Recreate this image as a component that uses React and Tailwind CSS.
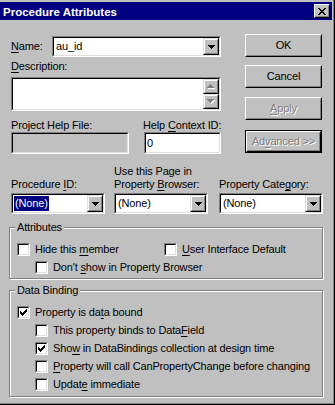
import React from 'react';

// classic win95 bevels
const Sunken = ({ className = '', innerClassName = '', children }) => (
  <div className={`border border-t-[#808080] border-l-[#808080] border-b-white border-r-white ${className}`}>
    <div className={`h-full border border-t-black border-l-black border-b-[#dfdfdf] border-r-[#dfdfdf] ${innerClassName}`}>
      {children}
    </div>
  </div>
);

const ArrowBox = ({ className = '', children }) => (
  <div className={`border border-t-[#dfdfdf] border-l-[#dfdfdf] border-b-black border-r-black bg-[#c0c0c0] ${className}`}>
    <div className="h-full border border-t-white border-l-white border-b-[#808080] border-r-[#808080] flex items-center justify-center">
      {children}
    </div>
  </div>
);

const Down = ({ color = '#000' }) => (
  <svg width="7" height="4" viewBox="0 0 7 4" shapeRendering="crispEdges">
    <path d="M0 0h7v1H0zM1 1h5v1H1zM2 2h3v1H2zM3 3h1v1H3z" fill={color} />
  </svg>
);

const Up = ({ color = '#000' }) => (
  <svg width="7" height="4" viewBox="0 0 7 4" shapeRendering="crispEdges">
    <path d="M3 0h1v1H3zM2 1h3v1H2zM1 2h5v1H1zM0 3h7v1H0z" fill={color} />
  </svg>
);

// disabled arrow = gray glyph with a white one under it
const Dim = ({ children }) => (
  <div className="relative w-[8px] h-[5px]">
    <div className="absolute left-[1px] top-[1px]">{React.cloneElement(children, { color: '#fff' })}</div>
    <div className="absolute left-0 top-0">{React.cloneElement(children, { color: '#808080' })}</div>
  </div>
);

const U = ({ children }) => <span className="underline decoration-1 underline-offset-[2px]">{children}</span>;

const Combo = ({ className = '', children }) => (
  <Sunken className={`h-[21px] ${className}`} innerClassName="bg-white flex">
    <div className="flex-1 flex items-center pl-[1px] leading-[13px]">{children}</div>
    <ArrowBox className="w-[16px] h-full">
      <Down />
    </ArrowBox>
  </Sunken>
);

const Btn = ({ children, disabled, def, className = '' }) => (
  <div className={`w-[77px] h-[23px] ${def ? 'border border-black' : ''} ${className}`}>
    <div className="h-full border border-t-white border-l-white border-b-black border-r-black">
      <div
        className={`h-full border border-t-[#c0c0c0] border-l-[#c0c0c0] border-b-[#808080] border-r-[#808080] flex items-center justify-center leading-[13px] ${
          disabled ? 'text-[#808080] [text-shadow:1px_1px_0_#fff]' : ''
        }`}
      >
        {children}
      </div>
    </div>
  </div>
);

const Check = ({ checked }) => (
  <div className="w-[13px] h-[13px] shrink-0 border border-t-[#808080] border-l-[#808080] border-b-white border-r-white">
    <div className="w-full h-full border border-t-black border-l-black border-b-[#dfdfdf] border-r-[#dfdfdf] bg-white flex items-center justify-center">
      {checked && (
        <svg width="7" height="7" viewBox="0 0 7 7" shapeRendering="crispEdges">
          <path
            d="M6 0h1v1H6zM5 1h2v1H5zM0 2h1v1H0zM4 2h3v1H4zM0 3h2v1H0zM3 3h3v1H3zM0 4h5v1H0zM1 5h3v1H1zM2 6h1v1H2z"
            fill="#000"
          />
        </svg>
      )}
    </div>
  </div>
);

const CheckRow = ({ checked, children, className = '' }) => (
  <div className={`flex items-center h-[13px] ${className}`}>
    <Check checked={checked} />
    <span className="ml-[5px] leading-[13px] whitespace-nowrap">{children}</span>
  </div>
);

const Group = ({ title, className = '', children }) => (
  <fieldset
    className={`ml-[9px] w-[314px] border border-[#808080] shadow-[1px_1px_0_#fff,inset_1px_1px_0_#fff] pl-[7px] ${className}`}
  >
    <legend className="-ml-[2px] px-[2px] bg-[#c0c0c0] leading-[13px]">{title}</legend>
    {children}
  </fieldset>
);

export default function App() {
  return (
    <div className="w-[335px] h-[405px] bg-[#c0c0c0] border-r border-b border-r-black border-b-black text-black text-[11px] tracking-[-0.15px] font-['Liberation_Sans',Arial,sans-serif] overflow-hidden">
      <div className="h-full border-r border-b border-r-[#808080] border-b-[#808080] pr-[1px] flex flex-col">
        <div className="h-[2px] shrink-0" />

        {/* title bar */}
        <div className="h-[18px] shrink-0 bg-[#000080] flex items-center pl-[3px] pr-[2px]">
          <span className="flex-1 text-white font-bold text-[11.5px] tracking-normal leading-[16px] pt-[2px]">
            Procedure Attributes
          </span>
          <div className="w-[16px] h-[14px] border border-t-white border-l-white border-b-black border-r-black bg-[#c0c0c0]">
            <div className="h-full border border-t-[#c0c0c0] border-l-[#c0c0c0] border-b-[#808080] border-r-[#808080] flex items-center justify-center">
              <svg width="8" height="7" viewBox="0 0 8 7" shapeRendering="crispEdges">
                <path
                  d="M0 0h2v1H0zM6 0h2v1H6zM1 1h2v1H1zM5 1h2v1H5zM2 2h4v1H2zM3 3h2v1H3zM2 4h4v1H2zM1 5h2v1H1zM5 5h2v1H5zM0 6h2v1H0zM6 6h2v1H6z"
                  fill="#000"
                />
              </svg>
            </div>
          </div>
        </div>

        {/* top part: fields + buttons */}
        <div className="flex">
          <div className="ml-[11px] w-[210px]">
            <div className="mt-[16px] flex items-center h-[21px]">
              <span className="w-[41px] leading-[13px]">
                <U>N</U>ame:
              </span>
              <Combo className="w-[169px]">
                <span className="pl-[1px]">au_id</span>
              </Combo>
            </div>

            <div className="mt-[3px] leading-[13px]">
              <U>D</U>escription:
            </div>
            <Sunken className="mt-[4px] h-[34px]" innerClassName="bg-white flex justify-end">
              <div className="w-[16px] flex flex-col">
                <ArrowBox className="h-[15px]">
                  <Dim>
                    <Up />
                  </Dim>
                </ArrowBox>
                <ArrowBox className="h-[15px]">
                  <Dim>
                    <Down />
                  </Dim>
                </ArrowBox>
              </div>
            </Sunken>

            <div className="mt-[8px] flex">
              <div className="w-[118px]">
                <div className="leading-[13px]">Project Help File:</div>
                <Sunken className="h-[22px]" innerClassName="bg-[#c0c0c0]" />
              </div>
              <div className="ml-[15px] w-[77px]">
                <div className="leading-[13px] -ml-[1px] whitespace-nowrap">
                  Help <U>C</U>ontext ID:
                </div>
                <Sunken className="h-[22px]" innerClassName="bg-white flex items-center pl-[1px] leading-[13px]">
                  0
                </Sunken>
              </div>
            </div>
          </div>

          <div className="ml-[24px] flex flex-col">
            <Btn className="mt-[14px]">OK</Btn>
            <Btn className="mt-[8px]">Cancel</Btn>
            <Btn className="mt-[9px]" disabled>
              <U>A</U>pply
            </Btn>
            <Btn className="mt-[10px]" disabled def>
              Ad<U>v</U>anced &gt;&gt;
            </Btn>
          </div>
        </div>

        {/* id / browser / category row */}
        <div className="mt-[11px] ml-[11px] flex items-end">
          <div className="w-[94px]">
            <div className="leading-[13px]">
              Procedure <U>I</U>D:
            </div>
            <Combo className="mt-[2px]">
              <span className="bg-[#000080] text-white px-[1px] leading-[15px]">(None)</span>
            </Combo>
          </div>
          <div className="ml-[9px] w-[94px]">
            <div className="leading-[13px] whitespace-nowrap">
              Use this Page in
              <br />
              Property <U>B</U>rowser:
            </div>
            <Combo className="mt-[2px]">
              <span className="pl-[1px]">(None)</span>
            </Combo>
          </div>
          <div className="ml-[11px] w-[104px]">
            <div className="leading-[13px] whitespace-nowrap">
              Property Cate<U>g</U>ory:
            </div>
            <Combo className="mt-[2px]">
              <span className="pl-[1px]">(None)</span>
            </Combo>
          </div>
        </div>

        <Group title="Attributes" className="mt-[7px] pt-[9px] pb-[4px]">
          <div className="flex">
            <CheckRow className="w-[147px]">
              Hide this <U>m</U>ember
            </CheckRow>
            <CheckRow>
              <U>U</U>ser Interface Default
            </CheckRow>
          </div>
          <CheckRow className="mt-[5px] ml-[18px]">
            Don't <U>s</U>how in Property Browser
          </CheckRow>
        </Group>

        <Group title="Data Binding" className="mt-[5px] pt-[9px] pb-[5px]">
          <CheckRow checked>
            Property is da<U>t</U>a bound
          </CheckRow>
          <div className="ml-[18px] flex flex-col gap-[5px] mt-[5px]">
            <CheckRow>
              This property binds to Data<U>F</U>ield
            </CheckRow>
            <CheckRow checked>
              Sho<U>w</U> in DataBindings collection at design time
            </CheckRow>
            <CheckRow>
              <U>P</U>roperty will call CanPropertyChange before changing
            </CheckRow>
            <CheckRow>
              Updat<U>e</U> immediate
            </CheckRow>
          </div>
        </Group>
      </div>
    </div>
  );
}
